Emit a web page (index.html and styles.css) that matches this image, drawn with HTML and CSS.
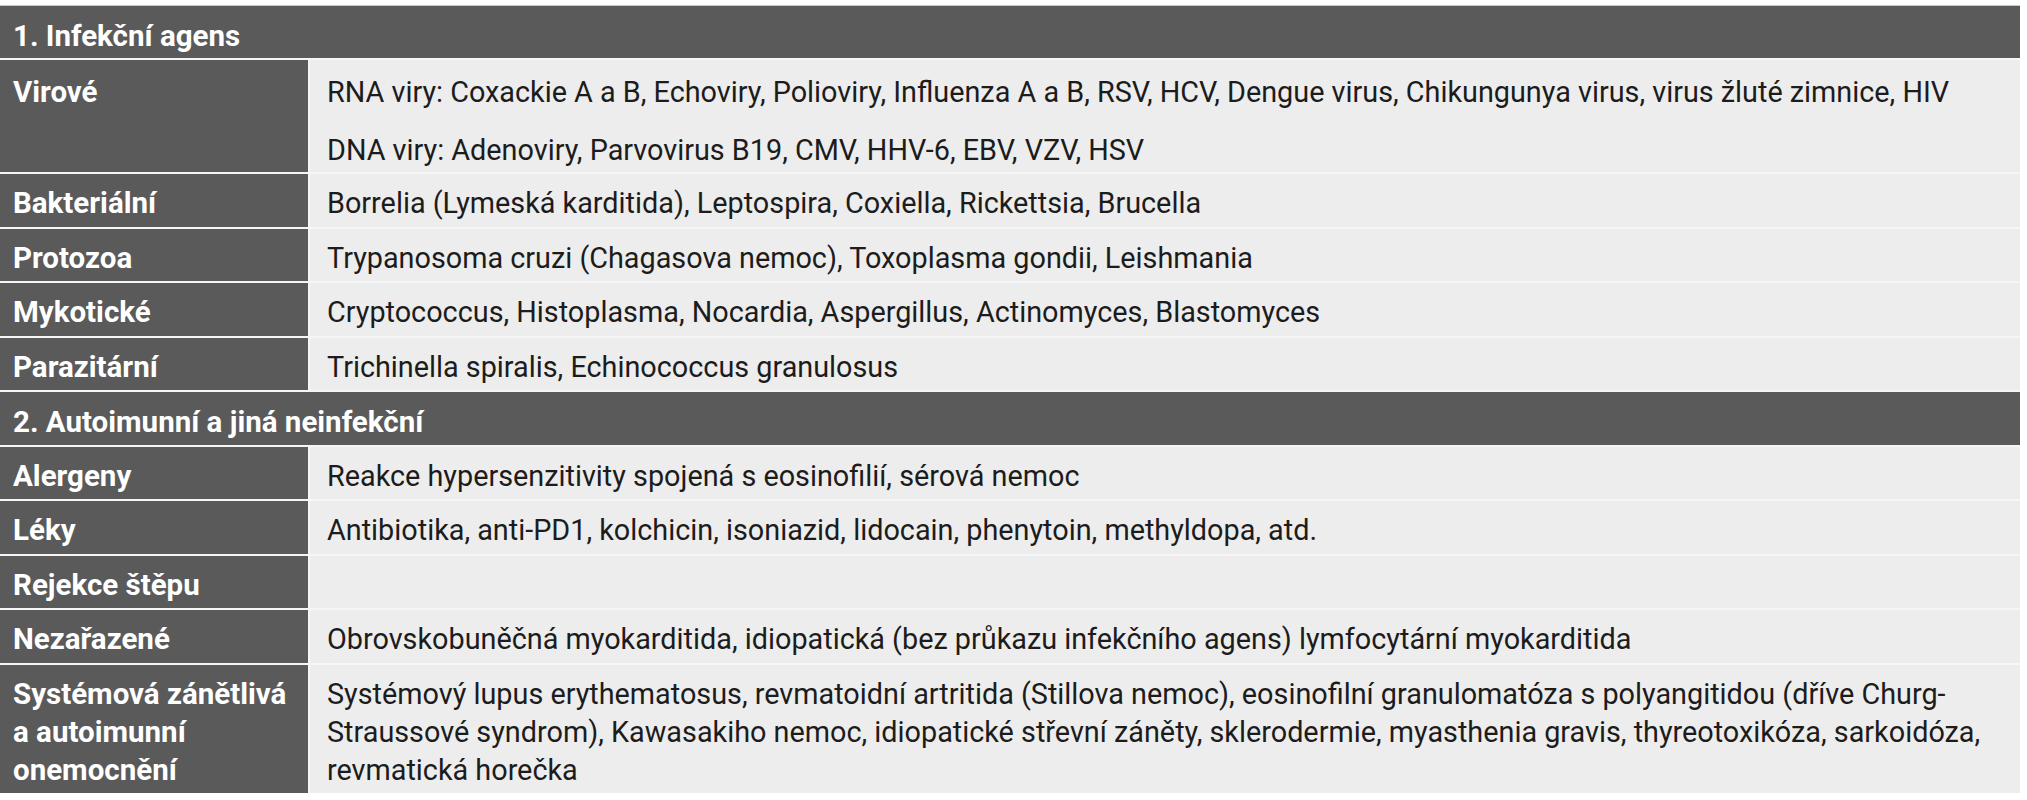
FILE: index.html
```html
<!DOCTYPE html>
<html lang="cs">
<head>
<meta charset="utf-8">
<title>Příčiny myokarditidy</title>
<link rel="stylesheet" href="styles.css">
</head>
<body>
<table class="tbl">
  <tr class="sec"><th colspan="2">1. Infekční agens</th></tr>
  <tr class="multi">
    <th>Virové</th>
    <td><p>RNA viry: Coxackie A a B, Echoviry, Polioviry, Influenza A a B, RSV, HCV, Dengue virus, Chikungunya virus, virus žluté zimnice, HIV</p><p>DNA viry: Adenoviry, Parvovirus B19, CMV, HHV-6, EBV, VZV, HSV</p></td>
  </tr>
  <tr><th>Bakteriální</th><td>Borrelia (Lymeská karditida), Leptospira, Coxiella, Rickettsia, Brucella</td></tr>
  <tr><th>Protozoa</th><td>Trypanosoma cruzi (Chagasova nemoc), Toxoplasma gondii, Leishmania</td></tr>
  <tr><th>Mykotické</th><td>Cryptococcus, Histoplasma, Nocardia, Aspergillus, Actinomyces, Blastomyces</td></tr>
  <tr><th>Parazitární</th><td>Trichinella spiralis, Echinococcus granulosus</td></tr>
  <tr class="sec"><th colspan="2">2. Autoimunní a jiná neinfekční</th></tr>
  <tr><th>Alergeny</th><td>Reakce hypersenzitivity spojená s eosinofilií, sérová nemoc</td></tr>
  <tr><th>Léky</th><td>Antibiotika, anti-PD1, kolchicin, isoniazid, lidocain, phenytoin, methyldopa, atd.</td></tr>
  <tr><th>Rejekce štěpu</th><td></td></tr>
  <tr><th>Nezařazené</th><td>Obrovskobuněčná myokarditida, idiopatická (bez průkazu infekčního agens) lymfocytární myokarditida</td></tr>
  <tr><th>Systémová zánětlivá a autoimunní onemocnění</th><td>Systémový lupus erythematosus, revmatoidní artritida (Stillova nemoc), eosinofilní granulomatóza s polyangitidou (dříve Churg-Straussové syndrom), Kawasakiho nemoc, idiopatické střevní záněty, sklerodermie, myasthenia gravis, thyreotoxikóza, sarkoidóza, revmatická horečka</td></tr>
</table>
</body>
</html>
```
FILE: styles.css
```css
html, body {
  margin: 0;
  padding: 0;
  background: #ffffff;
}
body {
  padding-top: 5px;
  font-family: Roboto, "Open Sans", sans-serif;
  font-size: 28.8px;
}
.tbl {
  width: 2020px;
  border-collapse: collapse;
  border-top: 1px solid #c8c8c8;
}
.tbl th,
.tbl td {
  border-top: 2px solid #f6f6f6;
  border-left: 2px solid #f6f6f6;
  padding: 10px 4px 4.5px 13px;
  line-height: 38px;
  text-align: left;
  vertical-align: top;
}
.tbl tr:first-child th {
  border-top: 0;
}
.tbl th {
  width: 291px;
  background: #5a5a5a;
  color: #ffffff;
  font-size: 29.5px;
  font-weight: 700;
  border-left: 0;
}
.tbl td {
  background: #ededed;
  color: #1c1c1c;
  font-weight: 400;
  padding-left: 17px;
  padding-right: 14px;
}
.tbl .sec th {
  width: auto;
  padding-top: 11px;
  padding-bottom: 3.5px;
}
.tbl .sec:first-child th {
  padding-top: 10.5px;
  padding-bottom: 3px;
}
.tbl p {
  margin: 0;
}
.tbl .multi th,
.tbl .multi td {
  padding-top: 13px;
  padding-bottom: 3.5px;
}
.tbl .multi p + p {
  margin-top: 20px;
}
```
